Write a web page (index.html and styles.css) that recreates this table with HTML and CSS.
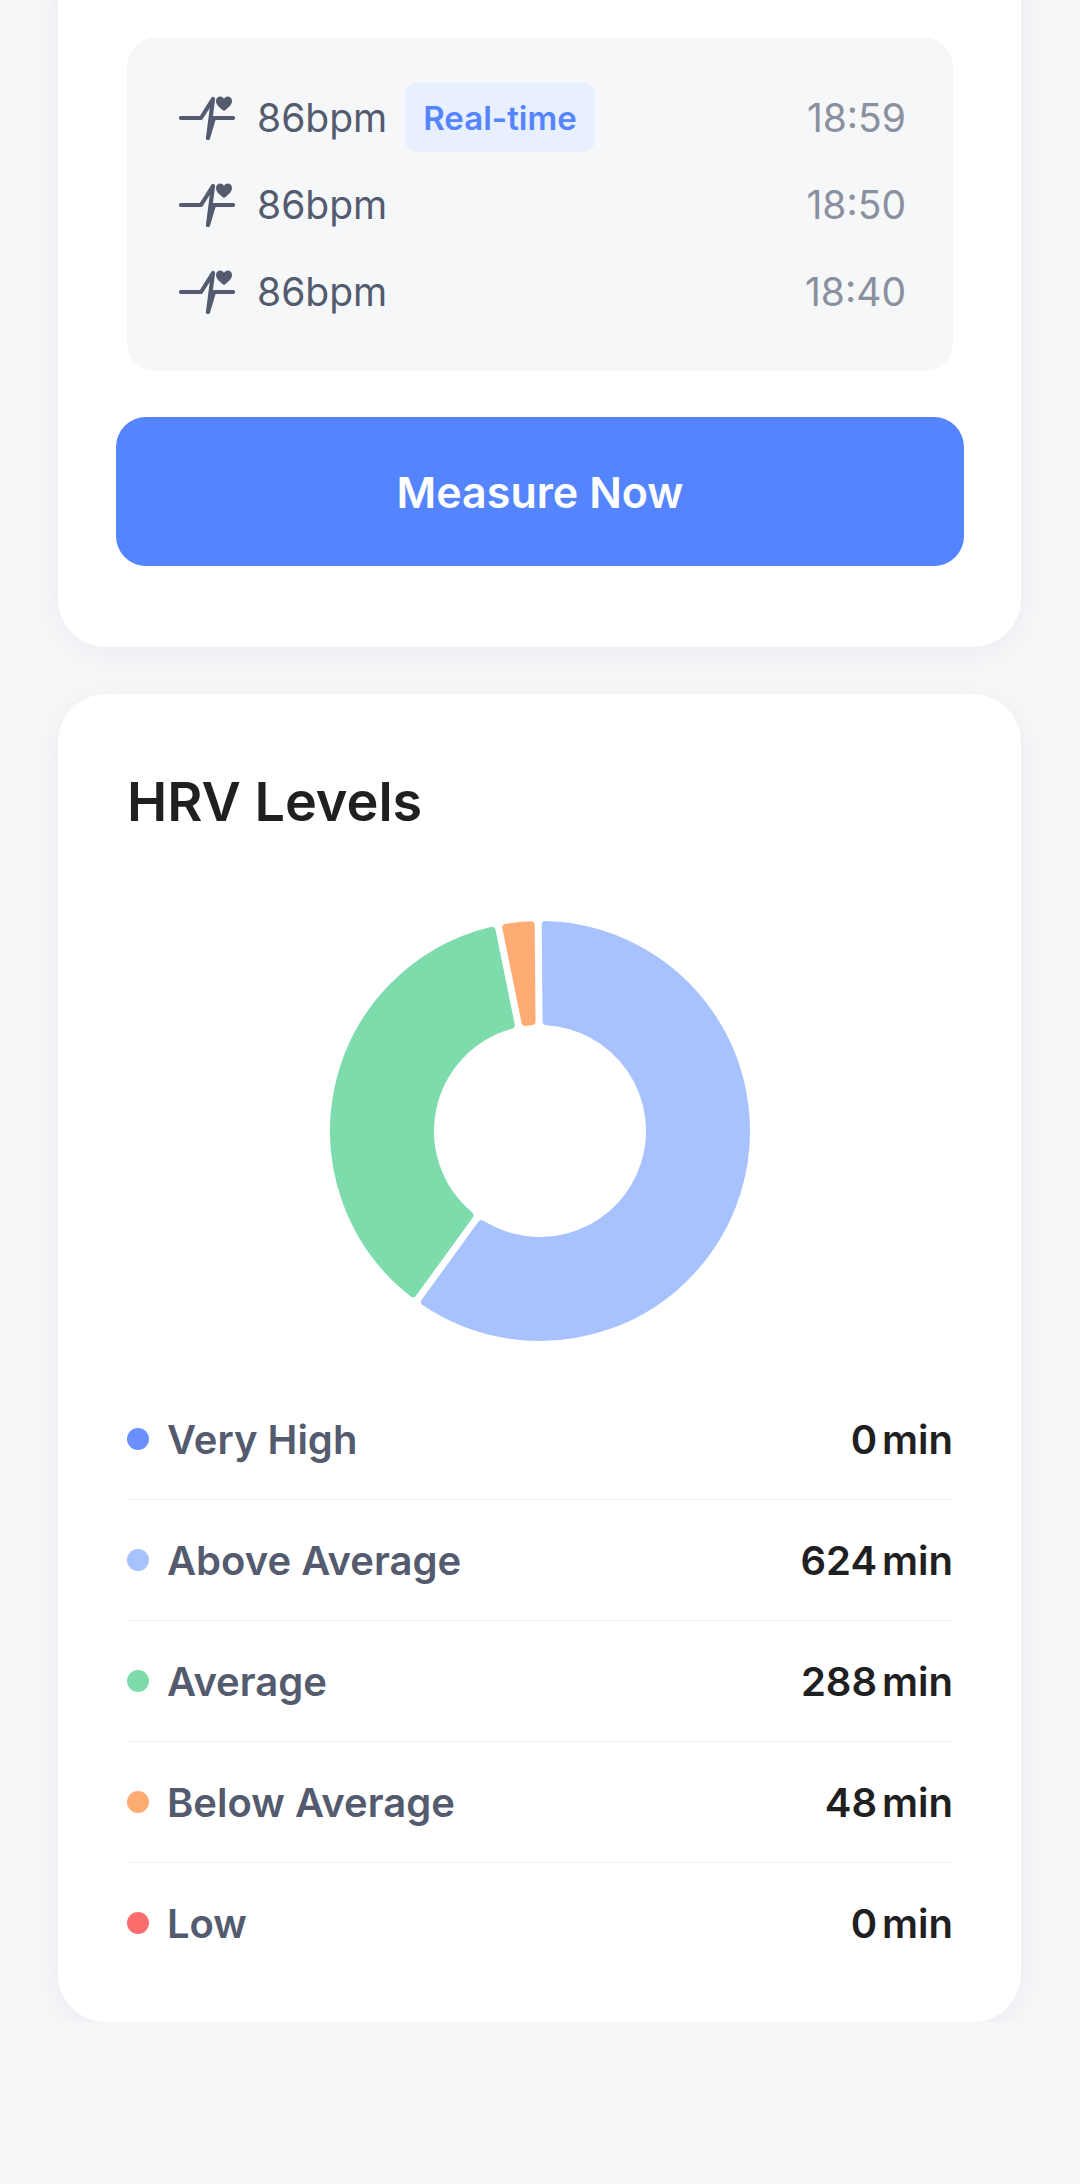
FILE: index.html
```html
<!DOCTYPE html>
<html lang="en">
<head>
<meta charset="utf-8">
<title>Heart Rate</title>
<link rel="stylesheet" href="styles.css">
</head>
<body>
<div class="page">
  <section class="card card-top">
    <div class="history">
      <div class="hr-row">
        <svg class="pulse" viewBox="0 0 56 44" width="56" height="44"><path d="M2 22 H22 L34 3 L29 42 L35 22 H54" fill="none" stroke="#545b6e" stroke-width="4.2" stroke-linejoin="round" stroke-linecap="round"/><path d="M45 15 C39 10.5 37 8 37 5 C37 2.2 39 0.5 41.3 0.5 C43 0.5 44.3 1.5 45 2.8 C45.7 1.5 47 0.5 48.7 0.5 C51 0.5 53 2.2 53 5 C53 8 51 10.5 45 15 Z" fill="#545b6e"/></svg>
        <span class="bpm">86bpm</span>
        <span class="badge">Real-time</span>
        <span class="time">18:59</span>
      </div>
      <div class="hr-row">
        <svg class="pulse" viewBox="0 0 56 44" width="56" height="44"><path d="M2 22 H22 L34 3 L29 42 L35 22 H54" fill="none" stroke="#545b6e" stroke-width="4.2" stroke-linejoin="round" stroke-linecap="round"/><path d="M45 15 C39 10.5 37 8 37 5 C37 2.2 39 0.5 41.3 0.5 C43 0.5 44.3 1.5 45 2.8 C45.7 1.5 47 0.5 48.7 0.5 C51 0.5 53 2.2 53 5 C53 8 51 10.5 45 15 Z" fill="#545b6e"/></svg>
        <span class="bpm">86bpm</span>
        <span class="time">18:50</span>
      </div>
      <div class="hr-row">
        <svg class="pulse" viewBox="0 0 56 44" width="56" height="44"><path d="M2 22 H22 L34 3 L29 42 L35 22 H54" fill="none" stroke="#545b6e" stroke-width="4.2" stroke-linejoin="round" stroke-linecap="round"/><path d="M45 15 C39 10.5 37 8 37 5 C37 2.2 39 0.5 41.3 0.5 C43 0.5 44.3 1.5 45 2.8 C45.7 1.5 47 0.5 48.7 0.5 C51 0.5 53 2.2 53 5 C53 8 51 10.5 45 15 Z" fill="#545b6e"/></svg>
        <span class="bpm">86bpm</span>
        <span class="time">18:40</span>
      </div>
    </div>
    <button class="measure">Measure Now</button>
  </section>

  <section class="card card-hrv">
    <h2 class="title">HRV Levels</h2>
    <div class="chart">
      <svg viewBox="-215 -215 430 430" width="430" height="430">
        <path d="M5.70 -205.92 A206 206 0 1 1 -114.93 170.96 L-58.44 93.19 A110 110 0 1 0 6.54 -109.81 Z" fill="#a8c2fe" stroke="#a8c2fe" stroke-width="8" stroke-linejoin="round"/>
        <path d="M-127.06 162.14 A206 206 0 0 1 -48.39 -200.23 L-29.23 -106.05 A110 110 0 0 0 -70.58 84.37 Z" fill="#7ddbac" stroke="#7ddbac" stroke-width="8" stroke-linejoin="round"/>
        <path d="M-33.70 -203.23 A206 206 0 0 1 -9.29 -205.79 L-8.46 -109.67 A110 110 0 0 0 -14.53 -109.04 Z" fill="#ffac74" stroke="#ffac74" stroke-width="8" stroke-linejoin="round"/>
      </svg>
    </div>
    <ul class="legend">
      <li class="legend-row"><span class="dot dot-vhigh"></span><span class="label">Very High</span><span class="value">0<span class="unit">min</span></span></li>
      <li class="legend-row"><span class="dot dot-above"></span><span class="label">Above Average</span><span class="value">624<span class="unit">min</span></span></li>
      <li class="legend-row"><span class="dot dot-avg"></span><span class="label">Average</span><span class="value">288<span class="unit">min</span></span></li>
      <li class="legend-row"><span class="dot dot-below"></span><span class="label">Below Average</span><span class="value">48<span class="unit">min</span></span></li>
      <li class="legend-row"><span class="dot dot-low"></span><span class="label">Low</span><span class="value">0<span class="unit">min</span></span></li>
    </ul>
  </section>
</div>
</body>
</html>
```

FILE: styles.css
```css
* {
  box-sizing: border-box;
}

html, body {
  margin: 0;
  padding: 0;
  background: #f6f7f9;
  font-family: Inter, "Noto Sans", "Liberation Sans", sans-serif;
}

.page {
  padding: 0 59px 0 58px;
  display: flex;
  flex-direction: column;
  gap: 47px;
}

.card {
  background: #ffffff;
  border-radius: 48px;
  box-shadow: 0 6px 30px rgba(20, 30, 60, 0.05);
}

.card-top {
  margin-top: -60px;
  padding: 98px 57px 81px 58px;
}

.history {
  margin: 0 11px;
  background: #f6f7f9;
  border-radius: 28px;
  padding: 36px 47px 36px 52px;
}

.hr-row {
  height: 87px;
  display: flex;
  align-items: center;
}

.pulse {
  flex: none;
  display: block;
}

.bpm {
  margin-left: 22px;
  font-size: 39px;
  font-weight: 400;
  color: #545b6e;
}

.badge {
  margin-left: 18px;
  height: 69px;
  padding: 0 18px;
  display: flex;
  align-items: center;
  background: #e8efff;
  border-radius: 12px;
  color: #5584ff;
  font-size: 33px;
  font-weight: 600;
}

.time {
  margin-left: auto;
  font-size: 39px;
  font-weight: 400;
  color: #8b909e;
}

.measure {
  display: block;
  width: 100%;
  height: 149px;
  margin-top: 46px;
  border: none;
  border-radius: 30px;
  background: #5485ff;
  color: #ffffff;
  font-family: Inter, "Noto Sans", "Liberation Sans", sans-serif;
  font-size: 43px;
  font-weight: 600;
}

.card-hrv {
  padding: 76px 68px 39px 69px;
}

.title {
  margin: 0;
  font-size: 54px;
  line-height: 64px;
  font-weight: 600;
  color: #1f2022;
}

.chart {
  margin-top: 82px;
  display: flex;
  justify-content: center;
}

.chart svg {
  display: block;
}

.legend {
  list-style: none;
  margin: 33px 0 0;
  padding: 0;
}

.legend-row {
  height: 121px;
  display: flex;
  align-items: center;
  border-bottom: 1px solid #f0f1f4;
}

.legend-row:last-child {
  border-bottom: none;
  height: 120px;
}

.dot {
  width: 22px;
  height: 22px;
  border-radius: 50%;
  flex: none;
}

.dot-vhigh { background: #6a8fff; }
.dot-above { background: #a8c2fe; }
.dot-avg { background: #7ddbac; }
.dot-below { background: #ffac74; }
.dot-low { background: #fd6d6d; }

.label {
  margin-left: 18px;
  font-size: 40px;
  font-weight: 600;
  color: #545b6e;
}

.value {
  margin-left: auto;
  font-size: 40px;
  font-weight: 600;
  color: #1f2022;
}

.unit {
  margin-left: 5px;
}
```
